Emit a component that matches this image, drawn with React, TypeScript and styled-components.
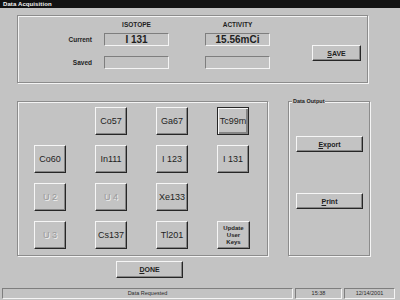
import React from 'react';
import styled, { createGlobalStyle } from 'styled-components';

const Global = createGlobalStyle`
  html, body { margin: 0; padding: 0; background: #c3c3c3; }
  body { font-family: "Liberation Sans", Arial, sans-serif; color: #1e1e1e; }
  * { box-sizing: border-box; }
`;

const Window = styled.div`
  width: 400px;
  height: 300px;
  background: #c3c3c3;
  display: flex;
  flex-direction: column;
  overflow: hidden;
`;

const TitleBar = styled.div`
  height: 8px;
  background: #121212;
  color: #f2f2f2;
  font-size: 6px;
  font-weight: bold;
  line-height: 8px;
  padding-left: 3px;
  letter-spacing: 0.1px;
`;

const Body = styled.div`
  flex: 1;
  display: flex;
  flex-direction: column;
  padding: 7px 0 0 17px;
`;

const Group = styled.div<{ $w: number; $h: number }>`
  position: relative;
  width: ${(p) => p.$w}px;
  height: ${(p) => p.$h}px;
  border: 1px solid #8c8c8c;
  box-shadow: inset 1px 1px #f4f4f4, 1px 1px #f4f4f4;
`;

const TopGrid = styled.div`
  display: grid;
  grid-template-columns: 85px 101px 107px 49px;
  grid-template-rows: 12px 13px 23px;
  padding: 5px 0 0 1px;
`;

const Header = styled.div`
  font-size: 6.5px;
  font-weight: bold;
  width: 65px;
  text-align: center;
  line-height: 8px;
`;

const RowLabel = styled.div<{ $end?: boolean }>`
  font-size: 6.5px;
  font-weight: bold;
  text-align: right;
  padding-right: 12px;
  align-self: ${(p) => (p.$end ? 'end' : 'center')};
  line-height: 13px;
`;

const ValueBox = styled.div<{ $end?: boolean }>`
  width: 65px;
  height: 13px;
  align-self: ${(p) => (p.$end ? 'end' : 'start')};
  border: 1px solid;
  border-color: #7e7e7e #f4f4f4 #f4f4f4 #7e7e7e;
  font-size: 10px;
  font-weight: bold;
  line-height: 11px;
  text-align: center;
`;

const WinButton = styled.button<{ $w: number; $h: number; $size?: number }>`
  width: ${(p) => p.$w}px;
  height: ${(p) => p.$h}px;
  padding: 0;
  margin: 0;
  background: #c3c3c3;
  border: 1px solid;
  border-color: #f6f6f6 #262626 #262626 #f6f6f6;
  box-shadow: inset -1px -1px #858585;
  font-family: "Liberation Sans", Arial, sans-serif;
  font-size: ${(p) => p.$size ?? 8}px;
  color: #1e1e1e;
  line-height: 1;
  display: flex;
  flex-direction: column;
  align-items: center;
  justify-content: center;

  u { text-decoration: underline; }
`;

const SaveButton = styled(WinButton)`
  grid-column: 4;
  grid-row: 2 / span 2;
  margin-top: 12px;
  align-self: start;
  font-size: 7px;
  font-weight: bold;
`;

const MiddleRow = styled.div`
  display: flex;
  gap: 20px;
  margin-top: 18px;
`;

const KeyGrid = styled.div`
  display: grid;
  grid-template-columns: repeat(4, 32px);
  grid-auto-rows: 28px;
  column-gap: 29px;
  row-gap: 10px;
  padding: 5px 0 0 16px;
`;

const KeyButton = styled(WinButton)<{ $selected?: boolean; $disabled?: boolean }>`
  font-size: 9px;
  color: ${(p) => (p.$disabled ? '#9a9a9a' : '#1e1e1e')};
  text-shadow: ${(p) => (p.$disabled ? '1px 1px #f0f0f0' : 'none')};
  ${(p) =>
    p.$selected &&
    `
    border-color: #262626;
    box-shadow: inset 1px 1px #f6f6f6, inset -2px -2px #858585;
  `}
`;

const Spacer = styled.div``;

const SmallKey = styled(WinButton)`
  font-size: 6px;
  font-weight: bold;
  line-height: 7px;
`;

const Legend = styled.div`
  position: absolute;
  top: -4px;
  left: 3px;
  padding: 0 1px;
  background: #c3c3c3;
  font-size: 5.5px;
  font-weight: bold;
  line-height: 7px;
`;

const OutputStack = styled.div`
  display: flex;
  flex-direction: column;
  gap: 41px;
  padding: 34px 0 0 7px;
`;

const WideButton = styled(WinButton)`
  font-size: 7px;
  font-weight: bold;
`;

const DoneRow = styled.div`
  margin: 5px 0 0 99px;
`;

const StatusBar = styled.div`
  height: 11px;
  margin: 0 5px 1px 2px;
  display: flex;
  gap: 2px;
`;

const StatusPanel = styled.div<{ $w?: number }>`
  ${(p) => (p.$w ? `width: ${p.$w}px;` : 'flex: 1;')}
  height: 11px;
  border: 1px solid;
  border-color: #7e7e7e #f4f4f4 #f4f4f4 #7e7e7e;
  font-size: 5.5px;
  line-height: 9px;
  text-align: center;
  color: #2a2a2a;
`;

type Key = { label?: React.ReactNode; selected?: boolean; disabled?: boolean; small?: boolean };

const keys: Key[] = [
  {},
  { label: 'Co57' },
  { label: 'Ga67' },
  { label: 'Tc99m', selected: true },
  { label: 'Co60' },
  { label: 'In111' },
  { label: 'I 123' },
  { label: 'I 131' },
  { label: 'U 2', disabled: true },
  { label: 'U 4', disabled: true },
  { label: 'Xe133' },
  {},
  { label: 'U 3', disabled: true },
  { label: 'Cs137' },
  { label: 'Tl201' },
  { small: true },
];

export default function App() {
  return (
    <>
      <Global />
      <Window>
        <TitleBar>Data Acquisition</TitleBar>
        <Body>
          <Group $w={351} $h={68}>
            <TopGrid>
              <div />
              <Header>ISOTOPE</Header>
              <Header>ACTIVITY</Header>
              <div />
              <RowLabel>Current</RowLabel>
              <ValueBox>I 131</ValueBox>
              <ValueBox>15.56mCi</ValueBox>
              <SaveButton $w={49} $h={16}>
                <span>
                  <u>S</u>AVE
                </span>
              </SaveButton>
              <RowLabel $end>Saved</RowLabel>
              <ValueBox $end />
              <ValueBox $end />
            </TopGrid>
          </Group>

          <MiddleRow>
            <Group $w={251} $h={155}>
              <KeyGrid>
                {keys.map((k, i) =>
                  k.small ? (
                    <SmallKey key={i} $w={33} $h={28}>
                      <span>Update</span>
                      <span>User</span>
                      <span>Keys</span>
                    </SmallKey>
                  ) : k.label ? (
                    <KeyButton
                      key={i}
                      $w={32}
                      $h={28}
                      $selected={k.selected}
                      $disabled={k.disabled}
                    >
                      {k.label}
                    </KeyButton>
                  ) : (
                    <Spacer key={i} />
                  )
                )}
              </KeyGrid>
            </Group>
            <Group $w={82} $h={155}>
              <Legend>Data Output</Legend>
              <OutputStack>
                <WideButton $w={67} $h={16}>
                  <span>
                    <u>E</u>xport
                  </span>
                </WideButton>
                <WideButton $w={67} $h={16}>
                  <span>
                    <u>P</u>rint
                  </span>
                </WideButton>
              </OutputStack>
            </Group>
          </MiddleRow>

          <DoneRow>
            <WideButton $w={67} $h={17}>
              <span>
                <u>D</u>ONE
              </span>
            </WideButton>
          </DoneRow>
        </Body>
        <StatusBar>
          <StatusPanel>Data Requested</StatusPanel>
          <StatusPanel $w={47}>15:38</StatusPanel>
          <StatusPanel $w={51}>12/14/2001</StatusPanel>
        </StatusBar>
      </Window>
    </>
  );
}
